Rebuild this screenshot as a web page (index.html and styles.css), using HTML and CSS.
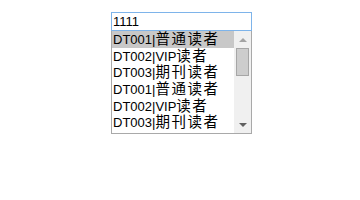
FILE: index.html
```html
<!DOCTYPE html>
<html lang="zh-CN">
<head>
  <meta charset="UTF-8">
  <title>读者类型</title>
  <link rel="stylesheet" href="styles.css">
</head>
<body>
  <div class="picker">
    <input type="text" class="search" value="1111">
    <div class="listbox">
      <div class="options">
        <div class="option selected">DT001|<span class="cjk">普通读者</span></div>
        <div class="option">DT002|VIP<span class="cjk">读者</span></div>
        <div class="option">DT003|<span class="cjk">期刊读者</span></div>
        <div class="option">DT001|<span class="cjk">普通读者</span></div>
        <div class="option">DT002|VIP<span class="cjk">读者</span></div>
        <div class="option">DT003|<span class="cjk">期刊读者</span></div>
      </div>
      <div class="scrollbar">
        <div class="arrow up"></div>
        <div class="track">
          <div class="thumb"></div>
        </div>
        <div class="arrow down"></div>
      </div>
    </div>
  </div>
</body>
</html>
```

FILE: styles.css
```css
body {
  margin: 0;
  background: #ffffff;
  font-family: "Liberation Sans", "Noto Sans CJK SC", sans-serif;
}

.picker {
  display: flex;
  flex-direction: column;
  width: 141px;
  padding: 12px 0 0 111px;
}

.search {
  box-sizing: border-box;
  width: 141px;
  height: 19px;
  margin: 0;
  padding: 0 1px;
  border: 1px solid #7eb4ea;
  outline: none;
  font-family: inherit;
  font-size: 13px;
  color: #000;
}

.listbox {
  display: flex;
  height: 102px;
  border: 1px solid #a9a9a9;
  border-top: none;
}

.options {
  flex: 1;
  overflow: hidden;
}

.option {
  height: 16.67px;
  line-height: 16.67px;
  padding-left: 1px;
  font-size: 13px;
  color: #000;
  white-space: nowrap;
}

.option .cjk {
  display: inline-block;
  height: 16.67px;
  font-family: "Noto Sans CJK SC", sans-serif;
  font-size: 14.5px;
  letter-spacing: 1.5px;
  line-height: 14.67px;
}

.option.selected {
  background: #c8c8c8;
}

.scrollbar {
  display: flex;
  flex-direction: column;
  width: 17px;
  background: #f0f0f0;
}

.arrow {
  height: 17px;
  display: flex;
  align-items: center;
  justify-content: center;
}

.arrow::after {
  content: "";
  width: 0;
  height: 0;
  border-left: 4px solid transparent;
  border-right: 4px solid transparent;
}

.arrow.up::after {
  border-bottom: 4px solid #a3a3a3;
}

.arrow.down::after {
  border-top: 4px solid #606060;
}

.track {
  flex: 1;
}

.thumb {
  box-sizing: border-box;
  width: 13px;
  height: 28px;
  margin: 0 2px;
  background: #cdcdcd;
  border: 1px solid #a6a6a6;
}
```
